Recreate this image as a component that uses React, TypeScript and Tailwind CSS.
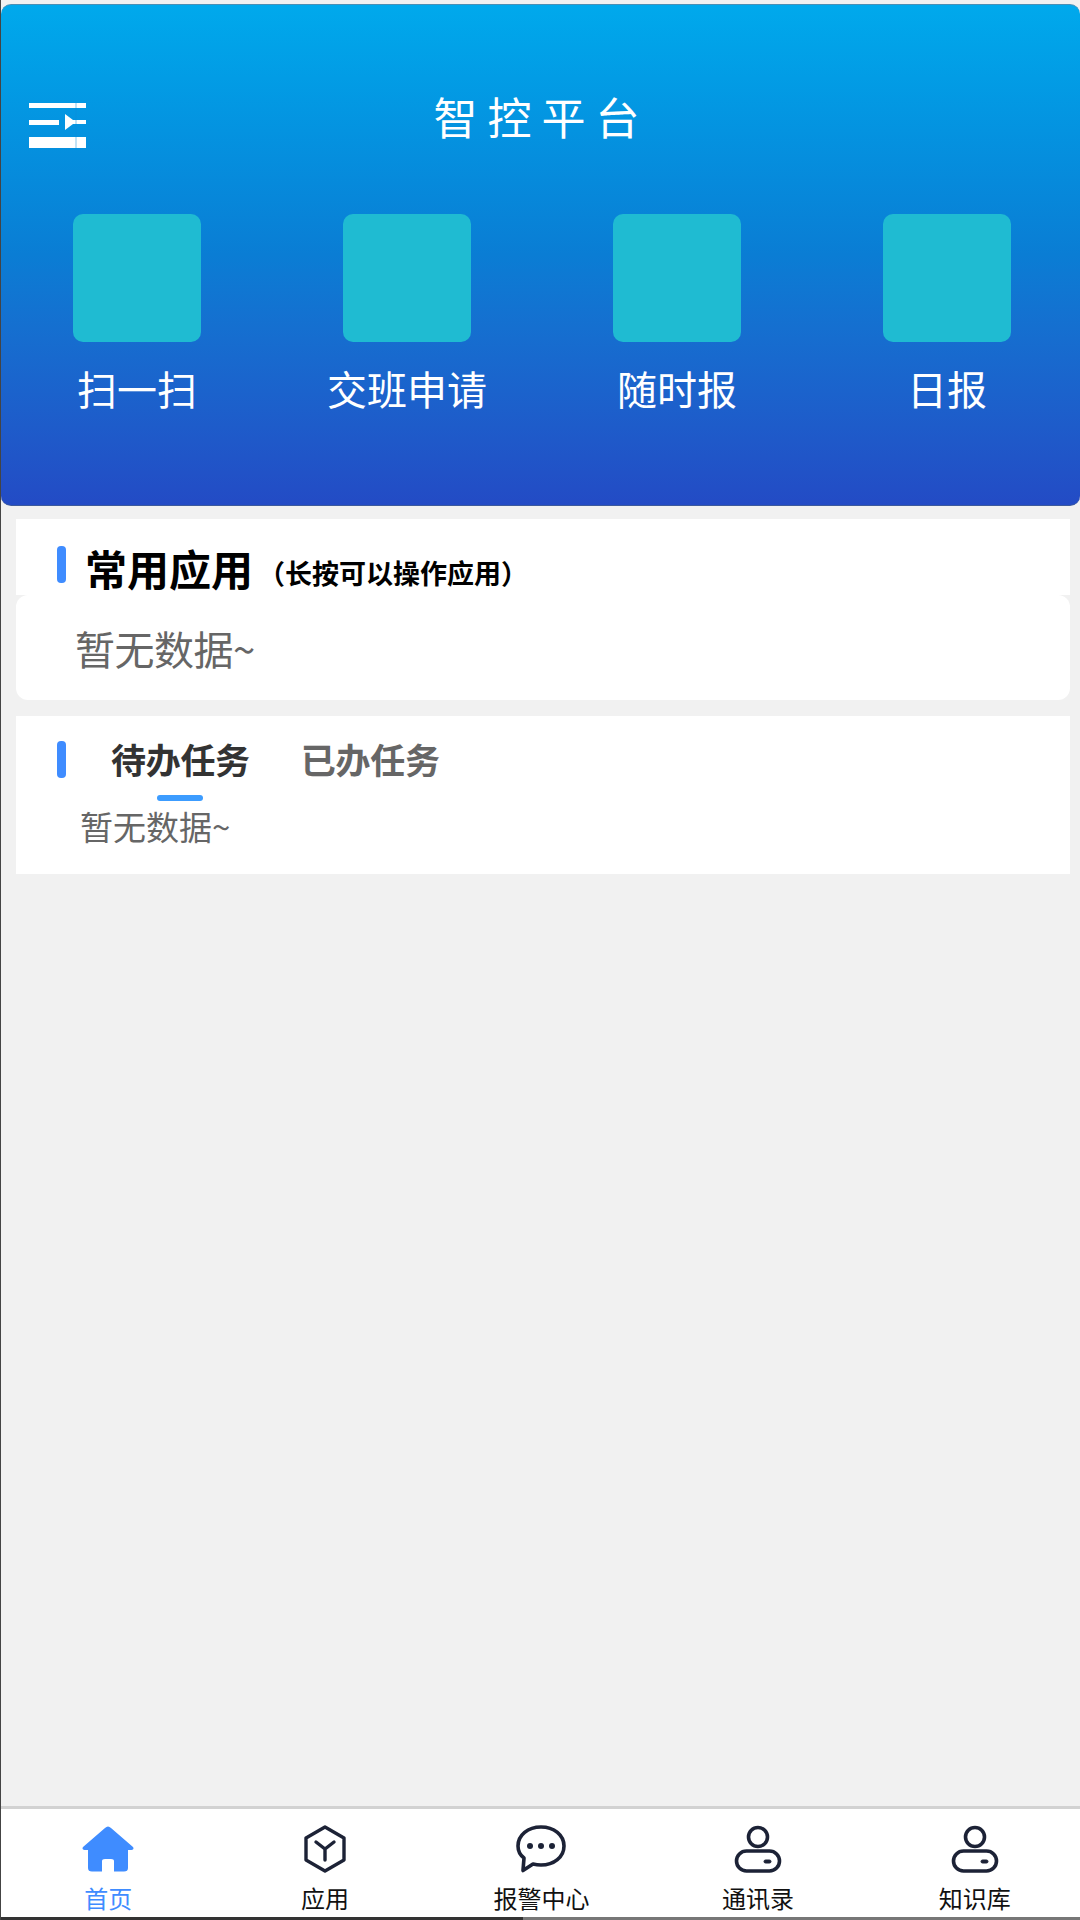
import type { ReactNode } from "react";

const cjk = "font-['Noto_Sans_CJK_SC','Noto_Sans',sans-serif]";

function MenuIcon() {
  return (
    <svg width="57" height="46" viewBox="0 0 57 46" fill="#fff">
      <rect x="0" y="0" width="57" height="5" />
      <rect x="0" y="17" width="30" height="5" />
      <path d="M36 11 L44 17 L57 17 L57 21 L44 21 L36 27 Z" />
      <rect x="0" y="34" width="57" height="11" />
      <rect x="46" y="0" width="2" height="45" fill="#0a8ad8" opacity="0.25" />
    </svg>
  );
}

function HomeIcon() {
  return (
    <svg width="52" height="46" viewBox="0 0 52 46" fill="#3f8cff">
      <path d="M26 0.5 Q27.5 0.5 29 2 L51 21 Q52.5 23.5 49.5 24 L46 24 L46 42 Q46 45.5 42 45.5 L32 45.5 L32 35 Q32 33 29 33 L23 33 Q20 33 20 35 L20 45.5 L10 45.5 Q6 45.5 6 42 L6 24 L2.5 24 Q-0.5 23.5 1 21 L23 2 Q24.5 0.5 26 0.5 Z" />
    </svg>
  );
}

function CubeIcon() {
  return (
    <svg width="44" height="48" viewBox="0 0 44 48" fill="none" stroke="#1c2236" strokeWidth="3.4" strokeLinecap="round" strokeLinejoin="round">
      <path d="M22 2 L41 13 L41 35 L22 46 L3 35 L3 13 Z" />
      <path d="M13 17 L22 24 L31 17 M22 24 L22 35" />
    </svg>
  );
}

function ChatIcon() {
  return (
    <svg width="50" height="48" viewBox="0 0 50 48" fill="none">
      <path d="M25 2 C38 2 48 10 48 21 C48 32 38 40 25 40 C22 40 19 39.5 17 39 L7 45.5 L8 33 C4 30 2 26 2 21 C2 10 12 2 25 2 Z" stroke="#1c2236" strokeWidth="3.6" strokeLinejoin="round" />
      <circle cx="14" cy="21" r="3" fill="#1c2236" />
      <circle cx="25" cy="21" r="3" fill="#1c2236" />
      <circle cx="36" cy="21" r="3" fill="#1c2236" />
    </svg>
  );
}

function UserIcon() {
  return (
    <svg width="48" height="48" viewBox="0 0 48 48" fill="none" stroke="#1c2236" strokeWidth="3.6">
      <circle cx="24" cy="12" r="9.5" />
      <rect x="2.5" y="26" width="43" height="20" rx="10" />
      <rect x="30" y="35" width="7" height="3" rx="1.5" fill="#1c2236" strokeWidth="1" />
    </svg>
  );
}

function Entry({ label }: { label: string }) {
  return (
    <div className="flex flex-col items-center">
      <div className="w-[128px] h-[128px] rounded-[10px] bg-[#1fbbd2]" />
      <div className="mt-[18px] text-[40px] leading-[56px] text-white">{label}</div>
    </div>
  );
}

function NavItem({ icon, label, active }: { icon: ReactNode; label: string; active?: boolean }) {
  return (
    <div className="flex flex-col items-center">
      <div className="h-[48px] flex items-center justify-center">{icon}</div>
      <div className={`mt-[8px] text-[24px] leading-[34px] ${active ? "text-[#3f8cff]" : "text-[#111]"}`}>{label}</div>
    </div>
  );
}

export default function App() {
  return (
    <div className={`w-[1080px] h-[1920px] flex flex-col bg-[#f1f1f1] border-l border-[#444] overflow-hidden ${cjk}`}>
      <header className="mt-[4px] h-[502px] shrink-0 rounded-[10px] border-y border-t-[#4a8fb5] border-b-[#3c5a9c] bg-gradient-to-b from-[#00a9ec] via-[#0a7dd4] via-50% to-[#234bc5] flex flex-col">
        <div className="relative h-[209px] shrink-0 flex justify-center">
          <div className="absolute left-[28px] top-[98px]"><MenuIcon /></div>
          <div className="ml-[2px] pt-[81px] text-[44px] leading-[60px] tracking-[10px] text-white">智控平台</div>
        </div>
        <div className="ml-[1px] w-[1080px] grid grid-cols-4 shrink-0">
          <Entry label="扫一扫" />
          <Entry label="交班申请" />
          <Entry label="随时报" />
          <Entry label="日报" />
        </div>
      </header>

      <section className="mt-[13px] ml-[15px] mr-[10px] shrink-0">
        <div className="bg-white h-[76px] flex items-start pl-[41px]">
          <div className="mt-[27px] w-[9px] h-[37px] rounded-[4px] bg-[#3f8cff]" />
          <div className="ml-[19px] mt-[21px] text-[42px] leading-[56px] font-bold text-black">常用应用</div>
          <div className="ml-[5px] mt-[32px] text-[27px] leading-[44px] font-bold text-black">（长按可以操作应用）</div>
        </div>
        <div className="bg-white h-[105px] rounded-[12px] pl-[59px] pt-[25px] text-[40px] leading-[56px] text-[#666] tracking-[-0.5px]">暂无数据~</div>
      </section>

      <section className="mt-[16px] ml-[15px] mr-[10px] h-[158px] bg-white shrink-0 flex flex-col">
        <div className="flex items-start pl-[41px]">
          <div className="mt-[25px] w-[9px] h-[37px] rounded-[4px] bg-[#3f8cff]" />
          <div className="relative ml-[45px] mt-[19px] text-[35px] leading-[48px] font-bold text-[#333] tracking-[-0.3px]">
            待办任务
            <div className="absolute left-[46px] top-[60px] w-[46px] h-[6px] rounded-[3px] bg-[#3c9cff]" />
          </div>
          <div className="ml-[51px] mt-[19px] text-[35px] leading-[48px] font-bold text-[#666] tracking-[-0.3px]">已办任务</div>
        </div>
        <div className="pl-[64px] mt-[21px] text-[33px] leading-[44px] text-[#666]">暂无数据~</div>
      </section>

      <div className="flex-1" />

      <nav className="h-[111px] w-[1083px] -ml-[1px] shrink-0 bg-white border-t-[3px] border-[#d2d2d2] grid grid-cols-5 pt-[16px]">
        <NavItem icon={<HomeIcon />} label="首页" active />
        <NavItem icon={<CubeIcon />} label="应用" />
        <NavItem icon={<ChatIcon />} label="报警中心" />
        <NavItem icon={<UserIcon />} label="通讯录" />
        <NavItem icon={<UserIcon />} label="知识库" />
      </nav>
      <div className="h-[3px] shrink-0 flex">
        <div className="w-[522px] bg-[#333]" />
        <div className="flex-1 bg-[#777]" />
      </div>
    </div>
  );
}
